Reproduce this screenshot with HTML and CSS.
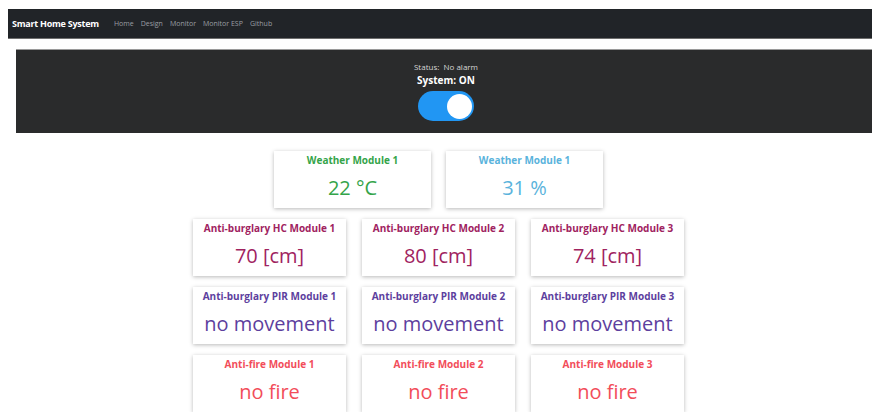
FILE: index.html
```html
<!DOCTYPE html>
<html lang="en">
<head>
<meta charset="utf-8">
<title>Smart Home System</title>
<link rel="stylesheet" href="styles.css">
</head>
<body>
  <nav class="navbar">
    <span class="brand">Smart Home System</span>
    <ul class="nav-links">
      <li>Home</li>
      <li>Design</li>
      <li>Monitor</li>
      <li>Monitor ESP</li>
      <li>Github</li>
    </ul>
  </nav>

  <section class="system-panel">
    <div class="status">Status:&nbsp; No alarm</div>
    <div class="system-state">System: ON</div>
    <label class="switch">
      <input type="checkbox" checked>
      <span class="slider"></span>
    </label>
  </section>

  <main class="modules">
    <div class="module-row">
      <div class="card wide weather-temp">
        <div class="card-title">Weather Module 1</div>
        <div class="card-value">22 °C</div>
      </div>
      <div class="card wide weather-hum">
        <div class="card-title">Weather Module 1</div>
        <div class="card-value">31 %</div>
      </div>
    </div>

    <div class="module-row">
      <div class="card hc">
        <div class="card-title">Anti-burglary HC Module 1</div>
        <div class="card-value">70 [cm]</div>
      </div>
      <div class="card hc">
        <div class="card-title">Anti-burglary HC Module 2</div>
        <div class="card-value">80 [cm]</div>
      </div>
      <div class="card hc">
        <div class="card-title">Anti-burglary HC Module 3</div>
        <div class="card-value">74 [cm]</div>
      </div>
    </div>

    <div class="module-row">
      <div class="card pir">
        <div class="card-title">Anti-burglary PIR Module 1</div>
        <div class="card-value">no movement</div>
      </div>
      <div class="card pir">
        <div class="card-title">Anti-burglary PIR Module 2</div>
        <div class="card-value">no movement</div>
      </div>
      <div class="card pir">
        <div class="card-title">Anti-burglary PIR Module 3</div>
        <div class="card-value">no movement</div>
      </div>
    </div>

    <div class="module-row">
      <div class="card fire">
        <div class="card-title">Anti-fire Module 1</div>
        <div class="card-value">no fire</div>
      </div>
      <div class="card fire">
        <div class="card-title">Anti-fire Module 2</div>
        <div class="card-value">no fire</div>
      </div>
      <div class="card fire">
        <div class="card-title">Anti-fire Module 3</div>
        <div class="card-value">no fire</div>
      </div>
    </div>
  </main>
</body>
</html>
```

FILE: styles.css
```css
* {
  box-sizing: border-box;
}

html, body {
  overflow: hidden;
}

body {
  margin: 9px 0 0 8px;
  font-family: "Open Sans", "Noto Sans", sans-serif;
  background: #ffffff;
  color: #212529;
}

/* top navigation bar */
.navbar {
  display: flex;
  align-items: center;
  height: 30px;
  padding: 0 0 0 4px;
  background: #212428;
  border-bottom: 1px solid #6e6e6e;
}

.brand {
  font-size: 9px;
  font-weight: 700;
  color: #ffffff;
  letter-spacing: -0.25px;
  margin-right: 15px;
}

.nav-links {
  display: flex;
  gap: 7px;
  margin: 0;
  padding: 0;
  list-style: none;
  font-size: 7px;
  color: #9a9ea3;
}

/* alarm / system switch panel */
.system-panel {
  margin: 10px 0 0 8px;
  padding: 11px 0 12px 4px;
  background: #2a2b2c;
  border-top: 1px solid #9a9a9a;
  display: flex;
  flex-direction: column;
  align-items: center;
}

.status {
  font-size: 8px;
  line-height: 12px;
  color: #d6d6d6;
}

.system-state {
  font-size: 10px;
  font-weight: 700;
  line-height: 14px;
  color: #ffffff;
}

.switch {
  position: relative;
  display: block;
  width: 56px;
  height: 30px;
  margin-top: 4px;
}

.switch input {
  opacity: 0;
  width: 0;
  height: 0;
  position: absolute;
}

.slider {
  position: absolute;
  inset: 0;
  background: #2196f3;
  border-radius: 15px;
}

.slider::before {
  content: "";
  position: absolute;
  width: 25px;
  height: 25px;
  top: 2.5px;
  left: 3px;
  background: #ffffff;
  border-radius: 50%;
}

.switch input:checked + .slider::before {
  left: auto;
  right: 2.5px;
}

/* module cards */
.modules {
  display: flex;
  flex-direction: column;
  align-items: center;
  gap: 11px;
  padding: 18px 3px 0 0;
}

.module-row {
  display: flex;
  gap: 16px;
}

.module-row:first-child {
  gap: 15px;
}

.card {
  width: 153px;
  height: 57px;
  padding-top: 2px;
  background: #ffffff;
  box-shadow: 0 1px 4px rgba(0, 0, 0, 0.28);
  text-align: center;
}

.card.wide {
  width: 157px;
}

.card-title {
  font-size: 10px;
  font-weight: 700;
  line-height: 15px;
}

.card-value {
  margin-top: 5px;
  font-size: 20px;
  line-height: 30px;
}

.weather-temp { color: #34a449; }
.weather-hum { color: #5ab3dc; }
.hc { color: #a0235f; }
.pir { color: #5d3f9e; }
.fire { color: #f24d5a; }
```
